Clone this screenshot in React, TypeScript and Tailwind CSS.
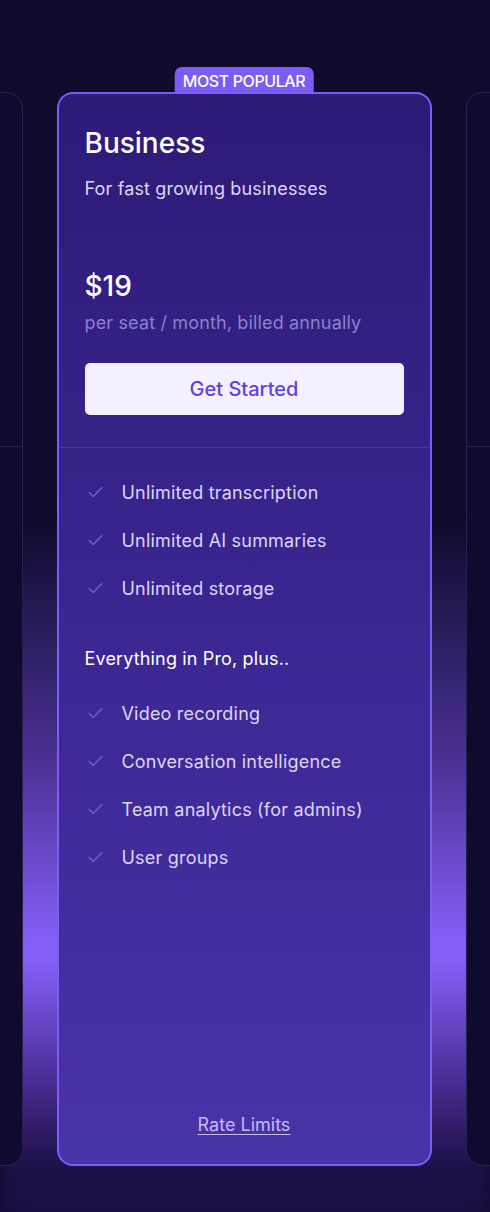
import { Check } from "lucide-react";

const core = ["Unlimited transcription", "Unlimited AI summaries", "Unlimited storage"];
const extras = ["Video recording", "Conversation intelligence", "Team analytics (for admins)", "User groups"];

function Feature({ label }: { label: string }) {
  return (
    <li className="flex items-center gap-[17px] h-[48px]">
      <Check className="w-[19px] h-[19px] ml-[1px] text-[#7a68c8]" strokeWidth={1.5} />
      <span className="text-[18px] tracking-[0.2px] text-[#ddd5fb]">{label}</span>
    </li>
  );
}

function SideCard() {
  return (
    <div className="relative z-10 w-[374px] shrink-0 h-[1074px] bg-[#110a2f] border border-[#2a2150] rounded-[16px] flex flex-col">
      <div className="h-[354px] border-b border-[#2a2150]" />
    </div>
  );
}

export default function App() {
  return (
    <div
      className="relative w-[490px] h-[1212px] overflow-hidden bg-[#100a2c]"
      style={{ fontFamily: "Inter, 'Noto Sans', sans-serif" }}
    >
      <div className="absolute left-0 right-0 top-[520px] h-[700px] bg-[linear-gradient(to_bottom,rgba(139,92,246,0)_0%,rgba(124,84,240,0.55)_35%,#8a62fd_62%,rgba(110,70,220,0.6)_80%,rgba(40,20,90,0.6)_92%,rgba(28,16,69,1)_100%)] blur-[10px]" />
      <div className="relative flex justify-center gap-[34px] pt-[92px] -ml-[2px]">
        <SideCard />
        <div className="relative z-10 w-[375px] shrink-0">
          <div className="absolute left-1/2 -translate-x-1/2 -top-[25px] h-[27px] px-[8px] rounded-t-[7px] bg-[#7b5cf6] flex items-center text-[16px] font-medium text-white tracking-tight whitespace-nowrap">
            MOST POPULAR
          </div>
          <div className="h-[1074px] rounded-[16px] border-2 border-[#7c5ef7] bg-[linear-gradient(to_bottom,#2e1a77_0%,#3a2590_45%,#4933a8_100%)] flex flex-col">
            <div className="px-[26px] pt-[31px] pb-[32px]">
              <h2 className="text-[28px] leading-[36px] font-medium text-white">Business</h2>
              <p className="mt-[14px] text-[18px] tracking-[0.15px] text-[#ddd6f8]">For fast growing businesses</p>
              <div className="mt-[67px] text-[28px] leading-[34px] font-medium text-white">$19</div>
              <p className="mt-[6px] text-[18px] tracking-[0.15px] text-[#8e7fd0]">per seat / month, billed annually</p>
              <button className="mt-[27px] w-full h-[52px] rounded-[5px] bg-[#f4f0ff] text-[20px] font-medium text-[#6140e0]">
                Get Started
              </button>
            </div>
            <div className="border-t border-[#4a37a0]" />
            <div className="px-[26px] pt-[20px] flex-1 flex flex-col">
              <ul>
                {core.map((f) => (
                  <Feature key={f} label={f} />
                ))}
              </ul>
              <p className="mt-[23px] mb-[6px] text-[18px] leading-[48px] tracking-[0.15px] text-white">Everything in Pro, plus..</p>
              <ul>
                {extras.map((f) => (
                  <Feature key={f} label={f} />
                ))}
              </ul>
              <div className="mt-auto pb-[26px] text-center">
                <a className="text-[18px] text-[#c7b9fb] underline underline-offset-[3px]">Rate Limits</a>
              </div>
            </div>
          </div>
        </div>
        <SideCard />
      </div>
    </div>
  );
}
